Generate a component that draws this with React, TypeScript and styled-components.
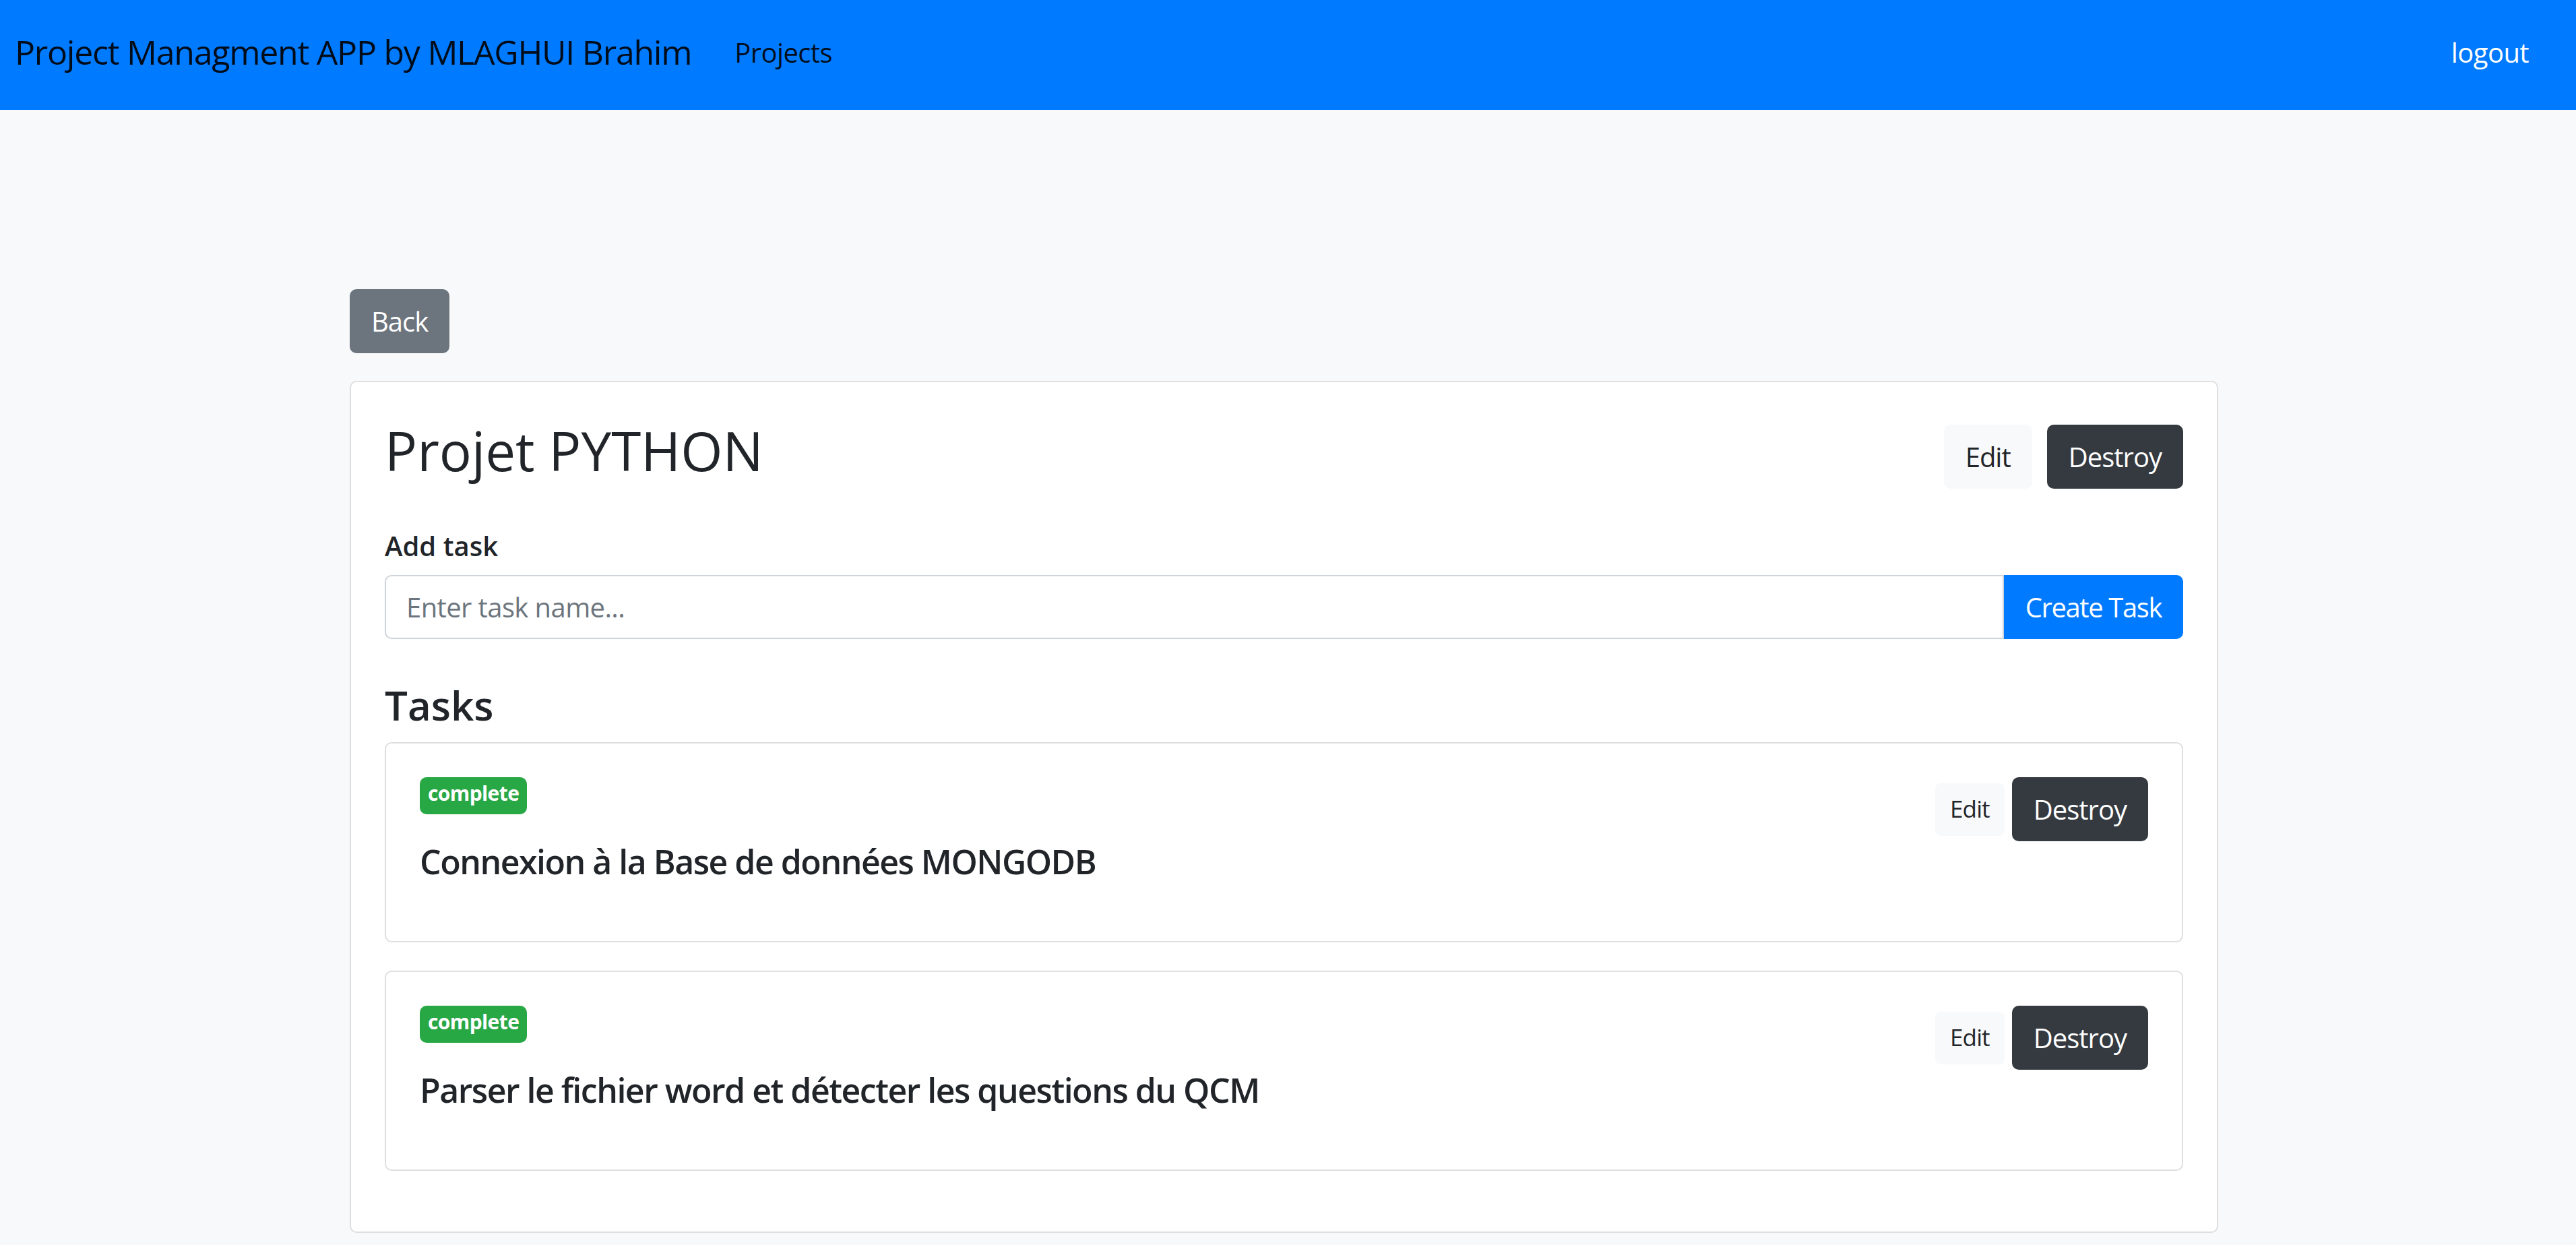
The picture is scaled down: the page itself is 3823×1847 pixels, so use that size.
import React from "react";
import styled, { createGlobalStyle } from "styled-components";

const GlobalStyle = createGlobalStyle`
  * { box-sizing: border-box; }
  html, body { margin: 0; padding: 0; }
  body {
    background: #f8f9fa;
    color: #212529;
    font-family: "Open Sans", "Noto Sans", sans-serif;
    font-size: 40px;
    line-height: 1.5;
  }
`;

type Variant = "primary" | "secondary" | "light" | "dark";

const palette: Record<Variant, { bg: string; fg: string }> = {
  primary: { bg: "#007bff", fg: "#ffffff" },
  secondary: { bg: "#6c757d", fg: "#ffffff" },
  light: { bg: "#f8f9fa", fg: "#212529" },
  dark: { bg: "#343a40", fg: "#ffffff" },
};

const NavBar = styled.nav`
  height: 163px;
  background: #007bff;
  display: flex;
  align-items: center;
  padding: 0 70px 8px 22px;
`;

const Brand = styled.a`
  font-size: 50px;
  line-height: 75px;
  color: rgba(0, 0, 0, 0.9);
  text-decoration: none;
  letter-spacing: -0.025em;
  margin-right: 44px;
  white-space: nowrap;
`;

const NavLink = styled.a<{ $light?: boolean; $end?: boolean }>`
  font-size: 40px;
  line-height: 60px;
  padding: 0 ${(p) => (p.$end ? "0" : "20px")};
  margin-left: ${(p) => (p.$end ? "auto" : "0")};
  color: ${(p) => (p.$light ? "#ffffff" : "rgba(0, 0, 0, 0.9)")};
  text-decoration: none;
  letter-spacing: -0.015em;
  white-space: nowrap;
`;

const Main = styled.main`
  padding: 266px 12px 0 0;
`;

const Container = styled.div`
  width: 2773px;
  margin: 0 auto;
  display: flex;
  flex-direction: column;
  align-items: flex-start;
`;

const Button = styled.button<{ $variant: Variant; $small?: boolean }>`
  display: inline-flex;
  align-items: center;
  justify-content: center;
  height: ${(p) => (p.$small ? 78 : 95)}px;
  padding: 0 ${(p) => (p.$small ? 20 : 30)}px;
  font-family: inherit;
  font-size: ${(p) => (p.$small ? 35 : 40)}px;
  font-weight: 400;
  line-height: 1.5;
  letter-spacing: -0.025em;
  color: ${(p) => palette[p.$variant].fg};
  background: ${(p) => palette[p.$variant].bg};
  border: 2px solid ${(p) => palette[p.$variant].bg};
  border-radius: ${(p) => (p.$small ? 8 : 10)}px;
  white-space: nowrap;
  cursor: pointer;
`;

const BackButton = styled(Button)`
  margin-bottom: 41px;
`;

const Card = styled.section`
  align-self: stretch;
  background: #ffffff;
  border: 2px solid #dfdfdf;
  border-radius: 10px;
  padding: 50px;
`;

const Header = styled.div`
  display: flex;
  justify-content: space-between;
  align-items: flex-start;
`;

const Title = styled.h2`
  margin: 3px 0 0;
  font-size: 80px;
  font-weight: 500;
  line-height: 96px;
`;

const Actions = styled.div<{ $compact?: boolean }>`
  display: flex;
  align-items: center;
  gap: ${(p) => (p.$compact ? 11 : 22)}px;
  margin-top: ${(p) => (p.$compact ? 0 : 13)}px;
`;

const Label = styled.label`
  display: block;
  margin: 55px 0 13px;
  font-size: 40px;
  font-weight: 600;
  line-height: 60px;
`;

const InputGroup = styled.div`
  display: flex;
  height: 95px;
`;

const Input = styled.input`
  flex: 1;
  min-width: 0;
  height: 95px;
  padding: 0 30px;
  font-family: inherit;
  font-size: 40px;
  letter-spacing: -0.015em;
  color: #495057;
  background: #ffffff;
  border: 2px solid #ced4da;
  border-radius: 10px 0 0 10px;
  outline: none;
  &::placeholder {
    color: #6c757d;
    opacity: 1;
  }
`;

const CreateButton = styled(Button)`
  border-radius: 0 10px 10px 0;
  letter-spacing: -0.035em;
`;

const SectionTitle = styled.h4`
  margin: 62px 0 19px;
  font-size: 60px;
  font-weight: 600;
  line-height: 72px;
`;

const TaskList = styled.div`
  display: flex;
  flex-direction: column;
  gap: 42px;
  margin-bottom: 40px;
`;

const TaskCard = styled.article`
  display: flex;
  justify-content: space-between;
  align-items: flex-start;
  border: 2px solid #dfdfdf;
  border-radius: 10px;
  padding: 50px;
`;

const TaskInfo = styled.div`
  display: flex;
  flex-direction: column;
  align-items: flex-start;
`;

const Badge = styled.span<{ $color: string }>`
  display: inline-flex;
  align-items: center;
  height: 55px;
  padding: 0 12px 7px;
  border-radius: 10px;
  background: ${(p) => p.$color};
  color: #ffffff;
  font-size: 30px;
  font-weight: 700;
  line-height: 1;
  letter-spacing: -0.02em;
`;

const TaskTitle = styled.h5`
  margin: 40px 0 38px;
  font-size: 50px;
  font-weight: 600;
  line-height: 60px;
  letter-spacing: -0.03em;
`;

const tasks = [
  { id: 1, status: "complete", name: "Connexion à la Base de données MONGODB" },
  { id: 2, status: "complete", name: "Parser le fichier word et détecter les questions du QCM" },
];

export default function App() {
  return (
    <>
      <GlobalStyle />
      <NavBar>
        <Brand href="#">Project Managment APP by MLAGHUI Brahim</Brand>
        <NavLink href="#">Projects</NavLink>
        <NavLink href="#" $light $end>
          logout
        </NavLink>
      </NavBar>
      <Main>
        <Container>
          <BackButton $variant="secondary">Back</BackButton>
          <Card>
            <Header>
              <Title>Projet PYTHON</Title>
              <Actions>
                <Button $variant="light">Edit</Button>
                <Button $variant="dark">Destroy</Button>
              </Actions>
            </Header>
            <Label htmlFor="task-name">Add task</Label>
            <InputGroup>
              <Input id="task-name" placeholder="Enter task name..." />
              <CreateButton $variant="primary">Create Task</CreateButton>
            </InputGroup>
            <SectionTitle>Tasks</SectionTitle>
            <TaskList>
              {tasks.map((t) => (
                <TaskCard key={t.id}>
                  <TaskInfo>
                    <Badge $color="#28a745">{t.status}</Badge>
                    <TaskTitle>{t.name}</TaskTitle>
                  </TaskInfo>
                  <Actions $compact>
                    <Button $variant="light" $small>
                      Edit
                    </Button>
                    <Button $variant="dark">Destroy</Button>
                  </Actions>
                </TaskCard>
              ))}
            </TaskList>
          </Card>
        </Container>
      </Main>
    </>
  );
}
